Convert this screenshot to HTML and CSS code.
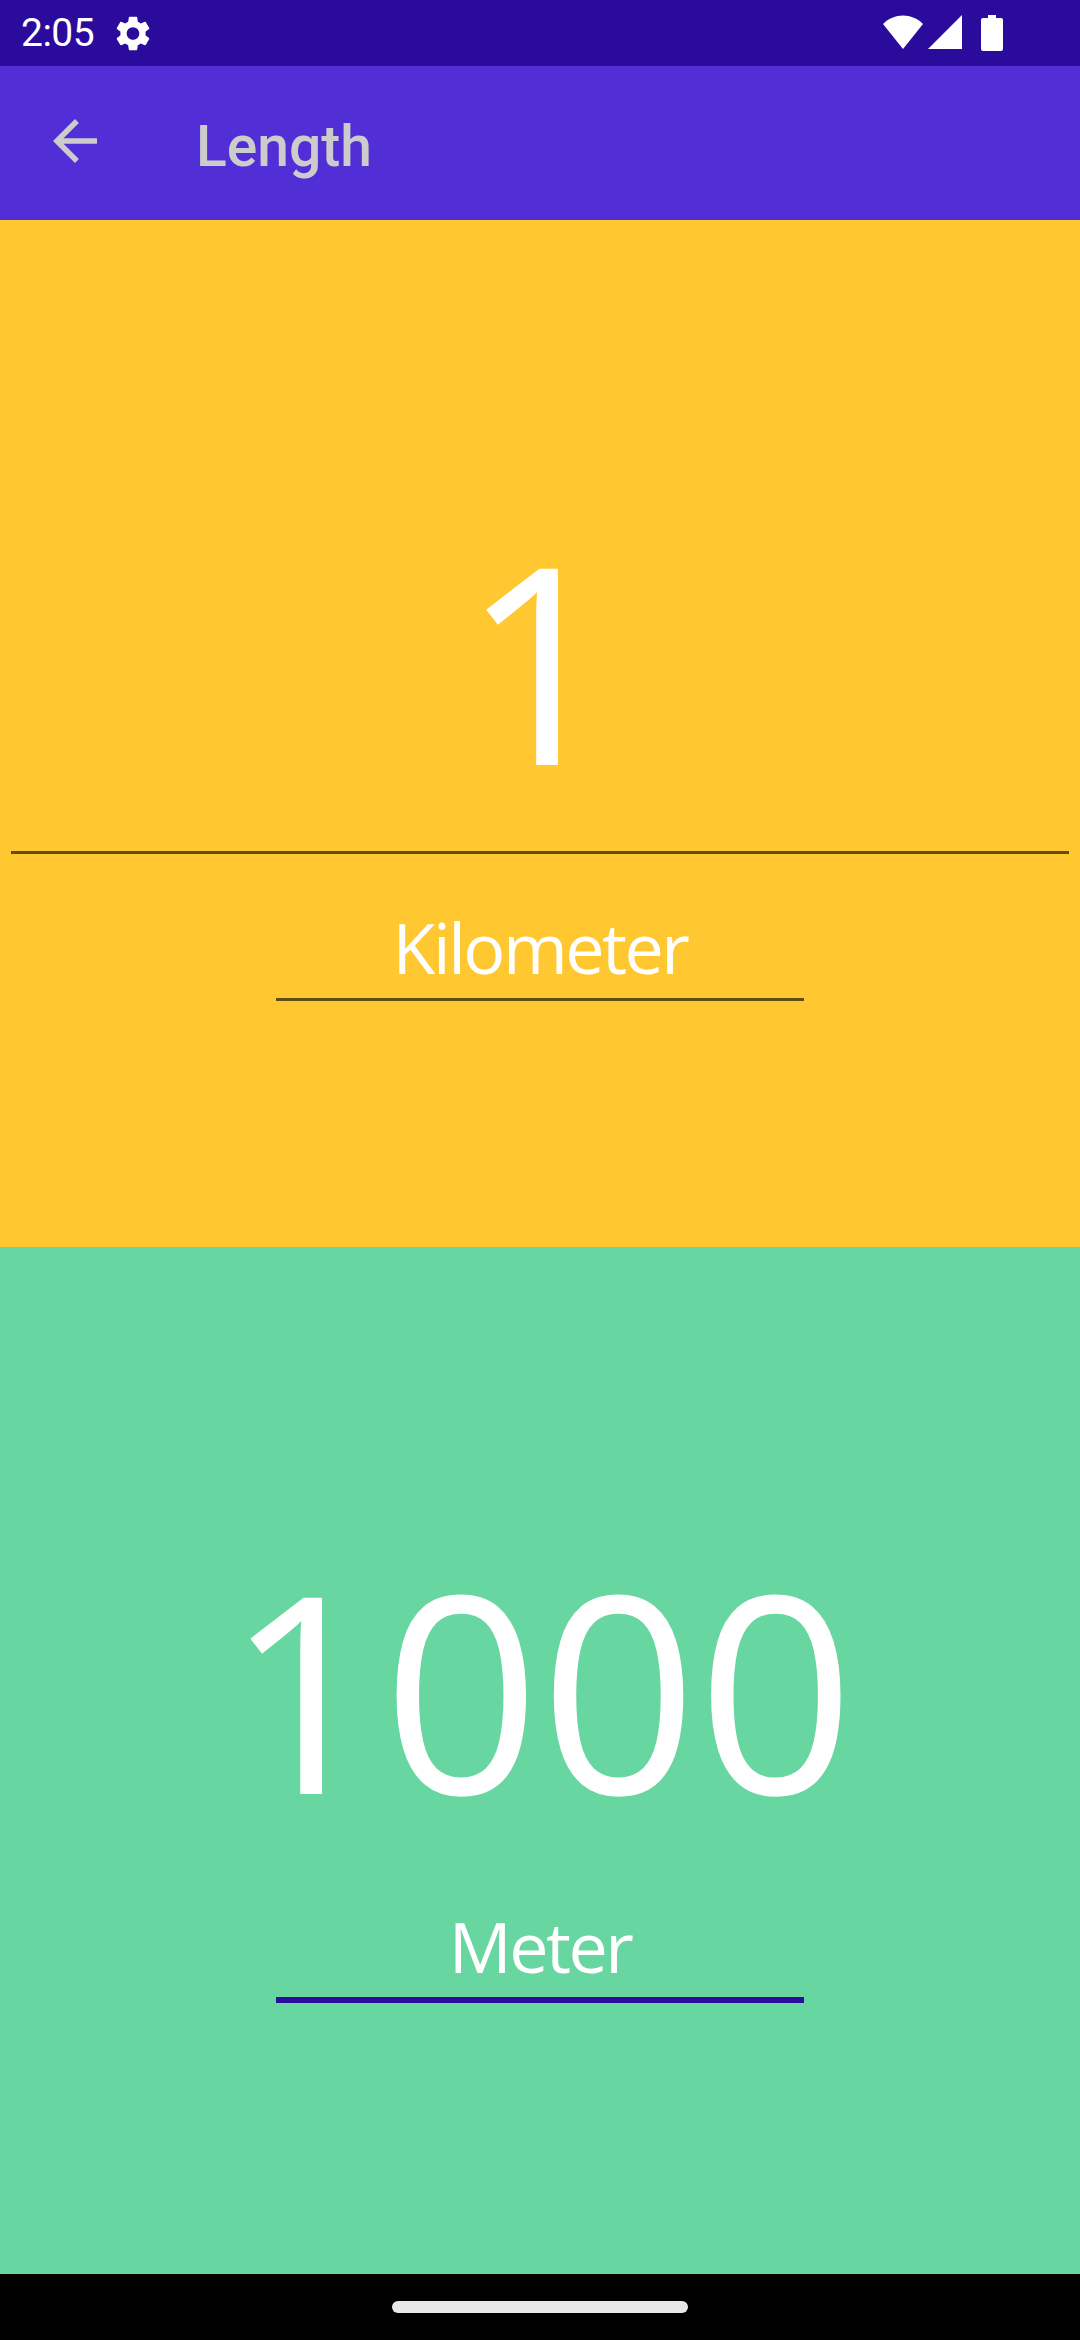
FILE: index.html
```html
<!DOCTYPE html>
<html>
<head>
<meta charset="utf-8">
<link rel="stylesheet" href="styles.css">
</head>
<body>
<div class="screen">
  <div class="status">
    <span class="time">2:05</span>
    <svg class="gear" viewBox="2.5 2 19 20"><path fill="#fff" d="M19.14 12.94c.04-.3.06-.61.06-.94 0-.32-.02-.64-.07-.94l2.03-1.58c.18-.14.23-.41.12-.61l-1.92-3.32c-.12-.22-.37-.29-.59-.22l-2.39.96c-.5-.38-1.030-.7-1.62-.94l-.36-2.54c-.04-.24-.24-.41-.48-.41h-3.84c-.24 0-.43.17-.47.41l-.36 2.540c-.59.24-1.13.57-1.62.94l-2.39-.96c-.22-.08-.47 0-.59.22L2.74 8.870c-.12.21-.08.47.12.61l2.03 1.58c-.05.3-.09.63-.09.94s.02.64.07.94l-2.03 1.58c-.18.14-.23.41-.12.61l1.92 3.32c.12.22.37.29.59.22l2.39-.96c.5.38 1.03.7 1.62.94l.36 2.54c.05.24.24.41.48.41h3.84c.24 0 .44-.17.47-.41l.36-2.54c.59-.24 1.13-.56 1.62-.94l2.39.96c.22.08.47 0 .59-.22l1.92-3.320c.12-.22.07-.47-.12-.61l-2.010-1.580zM12 15.6c-1.98 0-3.6-1.62-3.6-3.6s1.62-3.6 3.6-3.6 3.6 1.62 3.6 3.6-1.62 3.6-3.6 3.6z"/></svg>
    <div class="sys-icons">
      <svg class="wifi" viewBox="0 0 40 34"><path fill="#fff" d="M0 9 C 11 -2.5 29 -2.5 40 9 L20 34 Z"/></svg>
      <svg class="signal" viewBox="0 0 34 34"><path fill="#fff" d="M0 34 L34 0 L34 34 Z"/></svg>
      <svg class="battery" viewBox="0 0 22 36"><path fill="#fff" d="M7 0 H15 V3 H20 a2 2 0 0 1 2 2 V34 a2 2 0 0 1 -2 2 H2 a2 2 0 0 1 -2 -2 V5 a2 2 0 0 1 2 -2 H7 Z"/></svg>
    </div>
  </div>
  <div class="appbar">
    <svg class="back" viewBox="4 4 16 16"><path fill="#cccccc" d="M20 11H7.830l5.59-5.59L12 4l-8 8 8 8 1.41-1.41L7.830 13H20v-2z"/></svg>
    <span class="title">Length</span>
  </div>
  <div class="panel panel-from">
    <div class="number number-from">1</div>
    <div class="divider"></div>
    <div class="spinner spinner-from">Kilometer</div>
  </div>
  <div class="panel panel-to">
    <div class="number number-to">1000</div>
    <div class="spinner spinner-to">Meter</div>
  </div>
  <div class="navbar">
    <div class="handle"></div>
  </div>
</div>
</body>
</html>
```

FILE: styles.css
```css
* { box-sizing: border-box; }
html, body { margin: 0; padding: 0; }
body { width: 1080px; height: 2340px; overflow: hidden; background: #000; }
.screen { width: 1080px; height: 2340px; display: flex; flex-direction: column; }

.status {
  height: 66px;
  background: #2a0b9b;
  display: flex;
  align-items: center;
  padding: 0 77px 0 21px;
}
.time {
  font-family: Roboto, "Liberation Sans", sans-serif;
  font-size: 39px;
  line-height: 1;
  color: #fff;
  letter-spacing: -0.5px;
}
.gear { width: 34px; height: 35px; margin-left: 22px; }
.sys-icons { margin-left: auto; display: flex; align-items: flex-start; }
.wifi { width: 40px; height: 34px; }
.signal { width: 34px; height: 34px; margin-left: 5px; }
.battery { width: 22px; height: 36px; margin-left: 19px; }

.appbar {
  height: 154px;
  background: #512ed6;
  display: flex;
  align-items: flex-start;
  padding-left: 53px;
}
.back { width: 44px; height: 44px; margin-top: 53px; }
.title {
  font-family: Roboto, "Liberation Sans", sans-serif;
  font-weight: 500;
  font-size: 57px;
  line-height: 57px;
  color: #cccccc;
  margin-left: 99px;
  margin-top: 52px;
}

.panel {
  height: 1027px;
  display: flex;
  flex-direction: column;
  align-items: center;
}
.panel-from { background: #ffc730; }
.panel-to { background: #67d6a0; }

.number {
  font-family: "Open Sans", "Noto Sans", sans-serif;
  font-size: 275px;
  line-height: 275px;
  color: #fff;
  text-align: center;
}
.number-from { margin-top: 301px; }
.number-to { margin-top: 303px; }

.divider {
  width: 1058px;
  height: 3px;
  background: rgba(0, 0, 0, 0.62);
  margin-top: 55px;
}

.spinner {
  width: 528px;
  font-family: "Open Sans", "Noto Sans", sans-serif;
  font-weight: 500;
  font-size: 70px;
  line-height: 70px;
  letter-spacing: -2.5px;
  color: #fff;
  text-align: center;
  padding-bottom: 16px;
}
.spinner-from {
  margin-top: 58px;
  border-bottom: 3px solid rgba(0, 0, 0, 0.62);
}
.spinner-to {
  margin-top: 86px;
  border-bottom: 6px solid #2a0d9e;
}

.navbar {
  height: 66px;
  background: #000;
  display: flex;
  justify-content: center;
  padding-top: 27px;
}
.handle {
  width: 296px;
  height: 12px;
  border-radius: 6px;
  background: #e8e8e8;
}
```
